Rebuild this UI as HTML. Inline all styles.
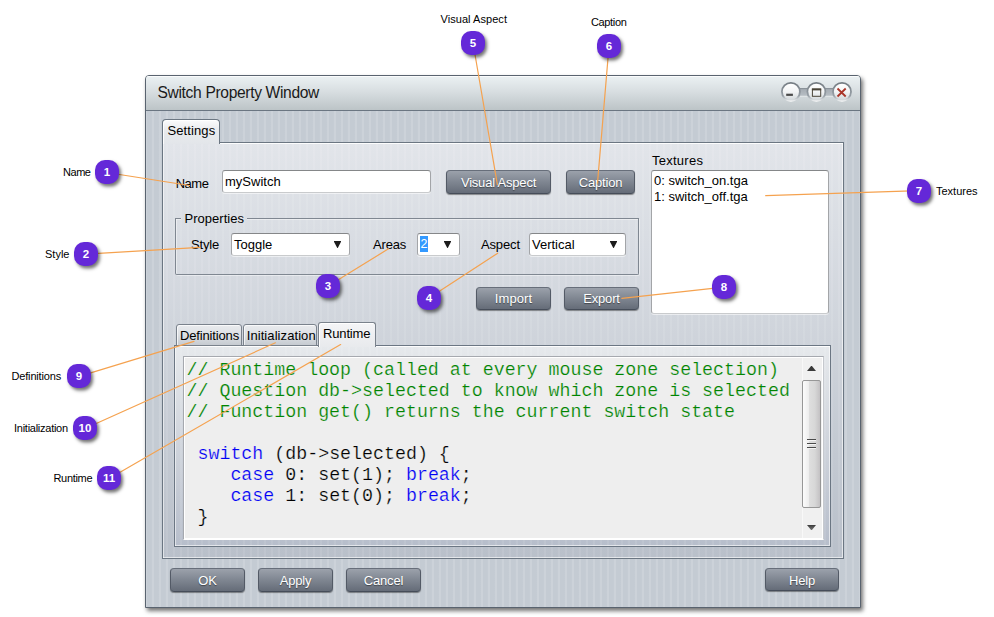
<!DOCTYPE html>
<html><head><meta charset="utf-8">
<style>
*{box-sizing:border-box;margin:0;padding:0}
html,body{width:994px;height:617px;background:#fff;overflow:hidden}
body{position:relative;font-family:"Liberation Sans",sans-serif;font-size:13px;color:#000}
.abs{position:absolute}
.lbl{position:absolute;font-size:11px;color:#000;white-space:nowrap;line-height:12px}
.mk{position:absolute;width:24px;height:24px;border-radius:10px;background:#6428d8;color:#fff;font-weight:bold;font-size:11.5px;line-height:24px;text-align:center;box-shadow:2px 2.5px 3.5px rgba(0,0,0,.55)}
#win{position:absolute;left:145px;top:75px;width:716px;height:533px;border:1px solid #59636f;border-radius:4px 4px 0 0;background-color:#c4cbd3;box-shadow:2px 3px 4px rgba(0,0,0,.55);overflow:hidden}
.stripes{background-image:repeating-linear-gradient(90deg,rgba(255,255,255,0) 0,rgba(255,255,255,0) 4.4px,rgba(255,255,255,.135) 5.3px,rgba(255,255,255,.135) 6.5px,rgba(255,255,255,0) 7px);background-position:var(--bx,0) 0}
.pg{background-image:repeating-linear-gradient(90deg,rgba(255,255,255,0) 0,rgba(255,255,255,0) 4.4px,rgba(255,255,255,.085) 5.3px,rgba(255,255,255,.085) 6.5px,rgba(255,255,255,0) 7px),linear-gradient(180deg,var(--c1),var(--c2));background-position:var(--bx,0) 0,0 0}
#title{position:absolute;left:0;top:0;width:714px;height:35px;background:linear-gradient(#ebf1f3,#d6dcdf 50%,#bcc4c7);border-bottom:1px solid #6b7682;box-shadow:inset 0 1px 0 rgba(255,255,255,.75)}
#title span{position:absolute;left:11.5px;top:8.3px;font-size:15.6px;letter-spacing:-0.34px;color:#1a1a1a;line-height:18px;white-space:nowrap}
.t{position:absolute;white-space:nowrap;font-size:13px;line-height:15px;color:#000;letter-spacing:-0.15px}
.btn{position:absolute;height:24px;border:1px solid #535a66;border-top-color:#676e7a;border-bottom-color:#464d59;border-radius:4px;background:linear-gradient(#9ba1ab,#7f8691 50%,#656c78);color:#fff;font-size:13px;letter-spacing:-0.2px;text-align:center;line-height:23px;text-shadow:0 1px 1px rgba(0,0,0,.45);box-shadow:0 1px 1px rgba(0,0,0,.4)}
.inp{position:absolute;background:#fff;border:1px solid #a3a5a8;border-top-color:#858789;border-bottom-color:#c9cbcd;border-radius:3px;box-shadow:0 1px 0 rgba(255,255,255,.55)}
.inp span{position:absolute;left:2px;top:3px;font-size:13px;line-height:15px;white-space:nowrap}
.arr{position:absolute;right:7.6px;top:7px;width:7.8px;height:7.4px;background:#1c1c1c;clip-path:polygon(0 0,100% 0,50% 100%)}
.code{position:absolute;font-family:"Liberation Mono",monospace;font-size:18.3px;line-height:21px;white-space:pre;color:#000;-webkit-text-stroke:0.22px #eee}
.g{color:#008400}.b{color:#0000f6}
</style></head><body>

<!-- window -->
<div id="win" class="stripes" style="--bx:-6px">
  <div id="title"><span>Switch Property Window</span></div>
</div>

<!-- window controls -->
<svg class="abs" style="left:778px;top:79px" width="84" height="28" viewBox="0 0 84 28">
  <defs>
    <linearGradient id="cg" x1="0" y1="0" x2="0" y2="1"><stop offset="0" stop-color="#ffffff"/><stop offset="0.5" stop-color="#f2f4f5"/><stop offset="1" stop-color="#d4d9dc"/></linearGradient>
    <linearGradient id="rg" x1="0" y1="0" x2="0" y2="1"><stop offset="0" stop-color="#727a81"/><stop offset="0.7" stop-color="#979fa6"/><stop offset="0.9" stop-color="#d6dadd"/><stop offset="1" stop-color="#fdfdfd"/></linearGradient>
    <linearGradient id="bg" x1="0" y1="0" x2="0" y2="1"><stop offset="0" stop-color="#7f878e"/><stop offset="0.2" stop-color="#a7aeb5"/><stop offset="0.85" stop-color="#b5bcc2"/><stop offset="1" stop-color="#eef1f2"/></linearGradient>
  </defs>
  <rect x="13" y="9" width="51" height="8.5" fill="url(#bg)"/>
  <circle cx="12.9" cy="12.8" r="9.9" fill="url(#rg)"/>
  <circle cx="38.4" cy="12.8" r="9.9" fill="url(#rg)"/>
  <circle cx="64" cy="12.8" r="9.9" fill="url(#rg)"/>
  <circle cx="12.9" cy="12.8" r="8.1" fill="url(#cg)"/>
  <circle cx="38.4" cy="12.8" r="8.1" fill="url(#cg)"/>
  <circle cx="64" cy="12.8" r="8.1" fill="url(#cg)"/>
  <rect x="8.2" y="14.7" width="6.7" height="2.2" fill="#4a4a4a"/>
  <rect x="34.4" y="10.2" width="8.3" height="7.1" fill="none" stroke="#4a4438" stroke-width="1"/>
  <rect x="33.9" y="9.4" width="9.3" height="2" fill="#4a4438"/>
  <path d="M59.5 9.5 L67.7 17.5 M67.7 9.5 L59.5 17.5" stroke="#aa3529" stroke-width="1.8" fill="none"/>
</svg>

<!-- Settings tab panel -->
<div class="abs pg" style="--bx:-2px;--c1:#e2e5ea;--c2:#b9c0ca;left:162px;top:142px;width:682px;height:417px;border:1px solid #6b7682;box-shadow:inset 0 1px 0 rgba(255,255,255,.9),inset 1px 0 0 rgba(255,255,255,.55),inset -1px -1px 0 rgba(255,255,255,.6)"></div>
<div class="abs" style="left:162px;top:119px;width:58px;height:25px;background:linear-gradient(#fbfbfc,#e8eaed 45%,#e3e6ea);border:1px solid #6b7682;border-bottom:none;border-radius:4px 4px 0 0;box-shadow:inset 1px 1px 0 rgba(255,255,255,.9)"></div>
<div class="t" style="left:167.5px;top:123px;letter-spacing:0.1px">Settings</div>

<!-- Name row -->
<div class="t" style="left:175.7px;top:176px;letter-spacing:-0.5px">Name</div>
<div class="inp" style="left:222px;top:170px;width:209px;height:23px"><span>mySwitch</span></div>
<div class="btn" style="left:446px;top:170px;width:105px">Visual Aspect</div>
<div class="btn" style="left:566px;top:170px;width:69px">Caption</div>

<!-- Textures -->
<div class="t" style="left:652px;top:153px;letter-spacing:0.25px">Textures</div>
<div class="inp" style="left:651px;top:170px;width:178px;height:144px"><span style="left:2px;top:2px;line-height:16px">0: switch_on.tga<br>1: switch_off.tga</span></div>

<!-- Properties group -->
<div class="abs" style="left:175px;top:218px;width:464px;height:57px;border:1px solid #7f8791;border-top:none;border-radius:0 0 2px 2px;box-shadow:1px 1px 0 rgba(255,255,255,.45), inset 1px 0 0 rgba(255,255,255,.45)"></div>
<div class="abs" style="left:176px;top:218px;width:5px;height:2px;border-top:1px solid #7f8791;background:rgba(255,255,255,.45)"></div>
<div class="abs" style="left:247px;top:218px;width:391px;height:2px;border-top:1px solid #7f8791;background:rgba(255,255,255,.45)"></div>
<div class="t" style="left:184.5px;top:211px;letter-spacing:0.03px">Properties</div>
<div class="t" style="left:191px;top:237px">Style</div>
<div class="inp" style="left:231px;top:233px;width:119px;height:23px"><span>Toggle</span><i class="arr"></i></div>
<div class="t" style="left:373px;top:237px">Areas</div>
<div class="inp" style="left:417px;top:233px;width:43px;height:23px"><span style="left:2px;top:2px;height:16px;line-height:17px;width:8px;background:#3399ff;color:#fff;text-align:center;font-size:12.5px">2</span><i class="arr"></i></div>
<div class="t" style="left:481px;top:237px">Aspect</div>
<div class="inp" style="left:529px;top:233px;width:97px;height:23px"><span>Vertical</span><i class="arr"></i></div>

<div class="btn" style="left:476px;top:287px;width:75px;height:23px;line-height:22px;letter-spacing:0.1px">Import</div>
<div class="btn" style="left:564px;top:287px;width:75px;height:23px;line-height:22px">Export</div>

<!-- inner tabs -->
<div class="abs pg" style="--bx:0px;--c1:#e6e9ec;--c2:#b7becb;left:174px;top:345px;width:657px;height:202px;border:1px solid #6b7683;box-shadow:inset 0 1px 0 rgba(255,255,255,.9),inset 1px 0 0 rgba(255,255,255,.55),inset -1px -1px 0 rgba(255,255,255,.6)"></div>
<div class="abs" style="left:176px;top:324px;width:66px;height:22px;background:linear-gradient(#e9ebee,#dde0e4 50%,#c6cbd1);border:1px solid #7a828c;border-radius:3px 3px 0 0;box-shadow:inset 1px 1px 0 rgba(255,255,255,.7)"></div>
<div class="abs" style="left:243px;top:324px;width:74px;height:22px;background:linear-gradient(#e9ebee,#dde0e4 50%,#c6cbd1);border:1px solid #7a828c;border-radius:3px 3px 0 0;box-shadow:inset 1px 1px 0 rgba(255,255,255,.7)"></div>
<div class="abs" style="left:318px;top:322px;width:58px;height:25px;background:linear-gradient(#f4f5f7,#e8eaed);border:1px solid #7a828c;border-bottom:none;border-radius:3px 3px 0 0;box-shadow:inset 1px 1px 0 #fff"></div>
<div class="t" style="left:180px;top:328px">Definitions</div>
<div class="t" style="left:246.7px;top:328px;letter-spacing:0.08px">Initialization</div>
<div class="t" style="left:323px;top:326px">Runtime</div>

<!-- code area -->
<div class="abs" style="left:183px;top:356px;width:641px;height:184px;background:#eee;border:1px solid #a6a9af;border-right-color:#c6c9ce;border-bottom-color:#fff;box-shadow:inset 0 0 0 1px #fff"></div>
<div class="code" style="left:186.5px;top:360px"><span class="g">// Runtime loop (called at every mouse zone selection)
// Question db-&gt;selected to know which zone is selected
// Function get() returns the current switch state</span>

 <span class="b">switch</span> (db-&gt;selected) {
    <span class="b">case</span> 0: set(1); <span class="b">break</span>;
    <span class="b">case</span> 1: set(0); <span class="b">break</span>;
 }</div>

<!-- scrollbar -->
<div class="abs" style="left:802px;top:358px;width:20px;height:180px;background:#f0f0f0;border-left:1px solid #f8f8f8"></div>
<div class="abs" style="left:802px;top:380px;width:19px;height:128px;border:1px solid #979797;border-radius:2px;background:linear-gradient(90deg,#fcfcfc,#eeeeee 33%,#dedede 38%,#d7d7d7 70%,#c3c1c3)"></div>
<div class="abs" style="left:807px;top:439px;width:9px;height:1px;background:#4a4a4a;box-shadow:0 1px 0 #f4f4f4,0 4px 0 #4a4a4a,0 5px 0 #f4f4f4,0 8px 0 #4a4a4a,0 9px 0 #f4f4f4"></div>
<div class="abs" style="left:807px;top:365.6px;width:9px;height:5.5px;background:#3a3a3a;clip-path:polygon(50% 0,100% 100%,0 100%)"></div>
<div class="abs" style="left:807px;top:524.9px;width:9px;height:5.5px;background:linear-gradient(#3a3a3a,#777);clip-path:polygon(0 0,100% 0,50% 100%)"></div>

<!-- bottom buttons -->
<div class="btn" style="left:170px;top:568px;width:75px">OK</div>
<div class="btn" style="left:258px;top:568px;width:75px">Apply</div>
<div class="btn" style="left:346px;top:568px;width:75px">Cancel</div>
<div class="btn" style="left:765px;top:568px;width:74px;height:23px;line-height:23px">Help</div>

<!-- callout lines -->
<svg class="abs" style="left:0;top:0" width="994" height="617" viewBox="0 0 994 617">
 <g stroke="#f5a24f" stroke-width="1.2" fill="none" stroke-linecap="round">
  <line x1="106.7" y1="172.5" x2="189.5" y2="185.5"/>
  <line x1="86" y1="254.1" x2="200" y2="247.4"/>
  <line x1="328.1" y1="286" x2="388.5" y2="248.8"/>
  <line x1="429" y1="298" x2="497.7" y2="253.2"/>
  <line x1="473" y1="43" x2="497.4" y2="184.7"/>
  <line x1="609" y1="46.2" x2="597.5" y2="183.1"/>
  <line x1="919.1" y1="190.7" x2="765.7" y2="195.7"/>
  <line x1="723.9" y1="287.2" x2="621.8" y2="298.3"/>
  <line x1="79.2" y1="376.4" x2="194" y2="341.4"/>
  <line x1="85.1" y1="428.5" x2="275.4" y2="342.8"/>
  <line x1="108.8" y1="478.8" x2="340.6" y2="344.6"/>
 </g>
</svg>

<!-- markers -->
<div class="mk" style="left:95px;top:160px">1</div>
<div class="mk" style="left:74px;top:242px">2</div>
<div class="mk" style="left:316px;top:274px">3</div>
<div class="mk" style="left:417px;top:286px">4</div>
<div class="mk" style="left:461px;top:31px">5</div>
<div class="mk" style="left:597px;top:34px">6</div>
<div class="mk" style="left:907px;top:179px">7</div>
<div class="mk" style="left:712px;top:275px">8</div>
<div class="mk" style="left:67px;top:364px">9</div>
<div class="mk" style="left:73px;top:416px">10</div>
<div class="mk" style="left:97px;top:466px">11</div>

<div class="lbl" style="left:63px;top:166px;letter-spacing:-0.45px">Name</div>
<div class="lbl" style="left:45px;top:248px">Style</div>
<div class="lbl" style="left:440.5px;top:13px;letter-spacing:0.05px">Visual Aspect</div>
<div class="lbl" style="left:591px;top:16px;letter-spacing:-0.36px">Caption</div>
<div class="lbl" style="left:936px;top:185px">Textures</div>
<div class="lbl" style="left:11.5px;top:370px;letter-spacing:-0.17px">Definitions</div>
<div class="lbl" style="left:14px;top:422px;letter-spacing:-0.26px">Initialization</div>
<div class="lbl" style="left:53.5px;top:472px;letter-spacing:-0.32px">Runtime</div>
</body></html>
